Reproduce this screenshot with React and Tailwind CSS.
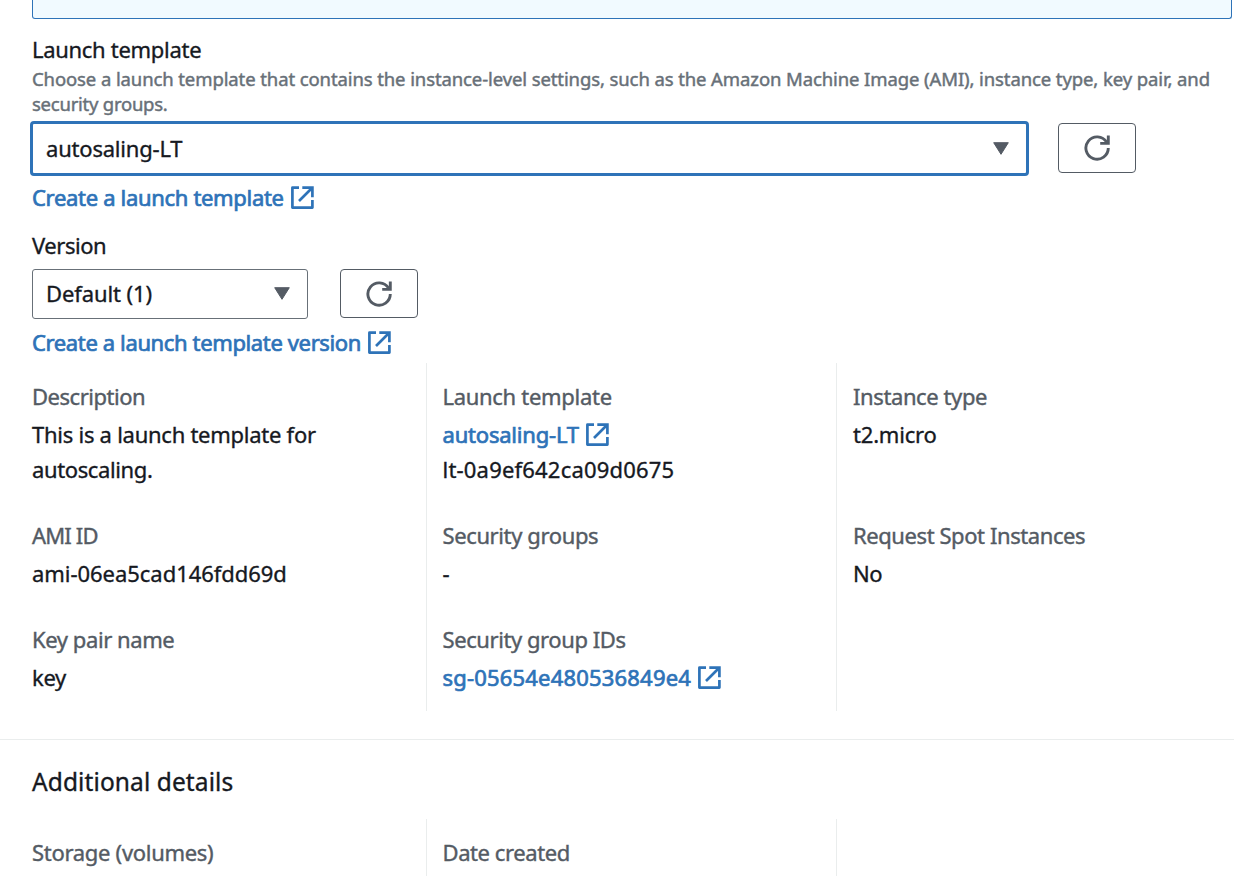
const LABEL = 'h-[33px] leading-[33px] text-[22px] text-[#545b64] whitespace-nowrap [-webkit-text-stroke:0.4px]'
const VALUE = 'mt-1 leading-[35px] text-[22px] text-[#16191f] whitespace-nowrap [-webkit-text-stroke:0.35px]'

function External({ className = '' }) {
  return (
    <svg viewBox="0 0 23 23" className={'size-[23px] shrink-0 ' + className} fill="none" stroke="currentColor" strokeWidth="2.7">
      <path d="M8 1.7H1.4v19.9h20V14" strokeLinejoin="round" />
      <path d="M11.3 1.7h10.1v9.6M21 2L8 15" />
    </svg>
  )
}

function Link({ children, spacing, className = '' }) {
  return (
    <a className={'flex items-center text-[22px] text-[#2e73b8] whitespace-nowrap [-webkit-text-stroke:0.7px] ' + className}>
      <span className={spacing}>{children}</span>
      <External className="ml-[7px]" />
    </a>
  )
}

function Refresh({ className = '' }) {
  return (
    <button className={'flex w-[78px] items-center justify-center rounded-[4px] border border-[#545b64] bg-white text-[#545b64] ' + className}>
      <svg viewBox="0 0 26 26" className="size-[26px]" fill="none" stroke="currentColor" strokeWidth="2.9">
        <path d="M24.3 13A11.2 11.2 0 1 1 22.6 7.1L23.6 8.4" />
        <path d="M24.3 .4v8H16.2" />
      </svg>
    </button>
  )
}

function Caret({ className = '' }) {
  return (
    <svg viewBox="0 0 16 13" className={'h-[13px] w-4 ' + className} fill="#545b64" stroke="#545b64" strokeLinejoin="round">
      <path d="M.7.7h14.6L8 12.3z" />
    </svg>
  )
}

function Field({ label, spacing, children, className = '' }) {
  return (
    <div className={className}>
      <div className={LABEL + ' ' + spacing}>{label}</div>
      {children}
    </div>
  )
}

export default function App() {
  return (
    <div className='h-[876px] w-[1234px] overflow-hidden bg-white text-[#16191f] [font-family:"Noto_Sans","Open_Sans",sans-serif]'>
      <div className="ml-8 h-[19px] w-[1200px] rounded-b-[3px] border border-t-0 border-[#2e73b8] bg-[#f1faff]" />

      <div className="pl-8">
        <div className="mt-[14px] h-[33px] text-[22px] leading-8 tracking-[-0.3px] [-webkit-text-stroke:0.35px]">Launch template</div>
        <div className="h-[55px] text-[18.5px] leading-[25px] text-[#687078] whitespace-nowrap [-webkit-text-stroke:0.45px]">
          <div className="tracking-[-0.103px]">Choose a launch template that contains the instance-level settings, such as the Amazon Machine Image (AMI), instance type, key pair, and</div>
          <div className="tracking-[-0.24px]">security groups.</div>
        </div>
        <div className="-ml-0.5 flex h-[55px] items-start">
          <div className="flex h-[55px] w-[999px] items-center justify-between rounded-[4px] border-[3px] border-[#2e73b8] pr-[17px] pl-[13px] text-[22px]">
            <span className="tracking-[-0.2px] [-webkit-text-stroke:0.35px]">autosaling-LT</span>
            <Caret />
          </div>
          <Refresh className="mt-0.5 ml-[29px] h-[50px]" />
        </div>
        <Link className="mt-[5px] h-[33px] pb-px" spacing="tracking-[-0.32px]">Create a launch template</Link>

        <div className="mt-[15px] h-8 text-[22px] leading-8 tracking-[-0.45px] [-webkit-text-stroke:0.35px]">Version</div>
        <div className="mt-2 flex h-[50px] items-start">
          <div className="flex h-[50px] w-[276px] items-center justify-between rounded-[3px] border border-[#687078] pr-[17px] pb-0.5 pl-[13px] text-[22px]">
            <span className="tracking-[-0.1px] [-webkit-text-stroke:0.35px]">Default (1)</span>
            <Caret />
          </div>
          <Refresh className="ml-8 h-[49px]" />
        </div>
        <Link className="mt-[7px] h-[33px] pb-px" spacing="tracking-[-0.37px]">Create a launch template version</Link>
      </div>

      <div className="mt-1 flex h-[348px] pl-8">
        <div className="flex w-[394px] flex-col gap-8 pt-[17px]">
          <Field label="Description" spacing="tracking-[-0.48px]">
            <div className={VALUE}>
              <div className="tracking-[-0.26px]">This is a launch template for</div>
              <div className="tracking-[-0.38px]">autoscaling.</div>
            </div>
          </Field>
          <Field label="AMI ID" spacing="tracking-[-0.85px]">
            <div className={VALUE + ' tracking-[-0.04px]'}>ami-06ea5cad146fdd69d</div>
          </Field>
          <Field label="Key pair name" spacing="tracking-[-0.42px]">
            <div className={VALUE + ' tracking-[-0.3px]'}>key</div>
          </Field>
        </div>
        <div className="flex w-[410px] flex-col gap-8 border-l border-[#eaeded] pt-[17px] pl-[15.5px]">
          <Field label="Launch template" spacing="tracking-[-0.3px]">
            <Link className="mt-1 h-[35px]" spacing="tracking-[-0.2px]">autosaling-LT</Link>
            <div className="text-[22px] leading-[35px] tracking-[0.2px] [-webkit-text-stroke:0.35px]">lt-0a9ef642ca09d0675</div>
          </Field>
          <Field label="Security groups" spacing="tracking-[-0.38px]">
            <div className={VALUE}>-</div>
          </Field>
          <Field label="Security group IDs" spacing="tracking-[-0.42px]">
            <Link className="mt-1 h-[35px]" spacing="tracking-[0.19px]">sg-05654e480536849e4</Link>
          </Field>
        </div>
        <div className="flex w-[398px] flex-col gap-8 border-l border-[#eaeded] pt-[17px] pl-4">
          <Field label="Instance type" spacing="tracking-[-0.4px]" className="h-[107px]">
            <div className={VALUE + ' tracking-[-0.2px]'}>t2.micro</div>
          </Field>
          <Field label="Request Spot Instances" spacing="tracking-[-0.42px]">
            <div className={VALUE + ' tracking-[-0.4px]'}>No</div>
          </Field>
        </div>
      </div>

      <div className="mt-7 border-t border-[#eaeded] pl-8">
        <div className="mt-6 h-9 text-[24.5px] leading-9 tracking-[0.1px] [-webkit-text-stroke:0.35px]">Additional details</div>
        <div className="mt-[19px] flex h-[57px]">
          <div className="w-[394px] pt-[17px]">
            <div className={LABEL + ' tracking-[-0.3px]'}>Storage (volumes)</div>
          </div>
          <div className="w-[410px] border-l border-[#eaeded] pt-[17px] pl-[15.5px]">
            <div className={LABEL + ' tracking-[-0.42px]'}>Date created</div>
          </div>
          <div className="w-[398px] border-l border-[#eaeded]" />
        </div>
      </div>
    </div>
  )
}
